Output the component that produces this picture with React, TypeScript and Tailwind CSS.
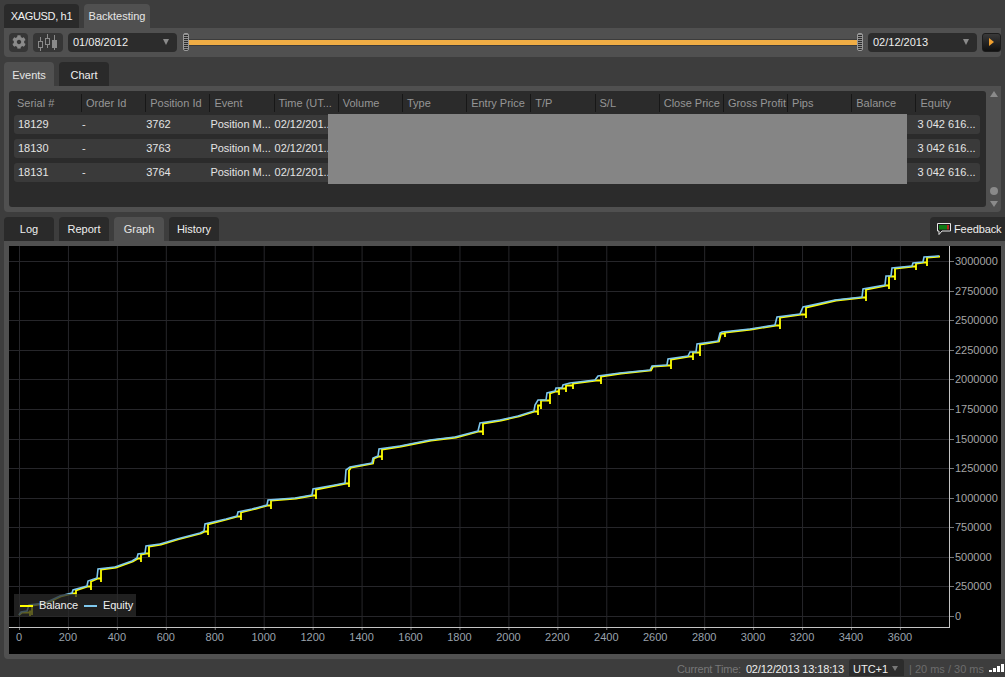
import { FaCog } from "react-icons/fa";

const font = "font-['Liberation_Sans',Arial,sans-serif]";

const columns = ["Serial #", "Order Id", "Position Id", "Event", "Time (UT...", "Volume", "Type", "Entry Price", "T/P", "S/L", "Close Price", "Gross Profit", "Pips", "Balance", "Equity"];

const rows = [
  ["18129", "-", "3762"],
  ["18130", "-", "3763"],
  ["18131", "-", "3764"],
];

// equity curve in chart pixels, [x, y] and true when the point is a jump
const curve: [number, number, boolean?][] = [
  [19, 615], [21, 612], [27, 611, true], [29, 605, true], [45, 603], [60, 596], [72, 593], [73, 590, true], [87, 586], [88, 581, true], [97, 578], [98, 569, true],
  [115, 567], [132, 561], [137, 558], [138, 554, true], [145, 553], [146, 546, true], [160, 544], [177, 539], [200, 533], [204, 531], [205, 524, true],
  [226, 519], [237, 516], [238, 512, true], [252, 509], [267, 505], [268, 500, true], [295, 498], [312, 495], [313, 489, true], [335, 485], [345, 483], [346, 470, true], [350, 467], [372, 463], [373, 458], [378, 456], [379, 449, true],
  [400, 446], [430, 440], [455, 437], [478, 431], [480, 423, true], [500, 420], [518, 416], [534, 411], [535, 405, true], [538, 400, true], [546, 400], [547, 393, true],
  [555, 391], [556, 388, true], [562, 388], [563, 385, true], [570, 383, true], [595, 380], [598, 376, true], [620, 373], [650, 370], [652, 366], [667, 365], [668, 359, true],
  [688, 356], [690, 352, true], [696, 352], [697, 344, true], [718, 341], [720, 333], [722, 332, true], [750, 329], [775, 325], [777, 317, true], [800, 314], [803, 307, true], [835, 300], [862, 297], [863, 289, true],
  [885, 285], [886, 276, true], [891, 276], [892, 268, true], [912, 266], [913, 263, true], [923, 262], [924, 257, true], [939, 256],
];

const equityPath = curve.map(([x, y], i) => `${i ? "L" : "M"}${x} ${y}`).join(" ");
const balancePath = curve
  .map(([x, y, jump], i) => {
    if (!i) return `M${x} ${y}`;
    const prev = curve[i - 1][1];
    if (jump) return `L${x + 3} ${prev + 0.5} L${x + 3} ${prev + 4} L${x + 3} ${y + 0.5}`;
    return `L${x + 1} ${y + 0.5}`;
  })
  .join(" ");

const xTicks = Array.from({ length: 19 }, (_, i) => i * 200);
const yTicks = Array.from({ length: 13 }, (_, i) => i * 250000);
const xPos = (v: number) => 10 + v * 0.2447;
const yPos = (v: number) => 370 - v / 8451;

const Tab = ({ label, active, w }: { label: string; active?: boolean; w: string }) => (
  <div className={`${w} h-6 pt-[2px] rounded-t-[4px] flex items-center justify-center text-[11px] ${active ? "bg-[#505050] text-[#e6e6e6]" : "bg-[#2a2a2a] text-[#efefef]"}`}>
    {label}
  </div>
);

const DateSelect = ({ value, w }: { value: string; w: string }) => (
  <div className={`${w} h-[19px] rounded-[4px] bg-[#2c2c2c] flex items-center justify-between pl-[5px] pr-[8px] text-[11px] text-[#efefef]`}>
    {value}
    <span className="w-0 h-0 border-x-[3px] border-x-transparent border-t-[6px] border-t-[#8a8a8a]" />
  </div>
);

const SliderHandle = () => (
  <div className="w-[6px] h-[18px] rounded-[2px] border border-[#9a9a9a] bg-[repeating-linear-gradient(0deg,#2a2a2a_0px,#2a2a2a_1px,#8c8c8c_1px,#8c8c8c_2px)] shrink-0" />
);

const Chart = () => (
  <svg width="992" height="408" className="block" style={{ fontFamily: "'Liberation Sans', Arial, sans-serif" }}>
    <rect width="992" height="408" fill="#000" />
    {xTicks.map((v) => (
      <g key={v}>
        <line x1={xPos(v) + 0.5} x2={xPos(v) + 0.5} y1="0" y2="381" stroke="#26262a" />
        <line x1={xPos(v) + 0.5} x2={xPos(v) + 0.5} y1="381" y2="384" stroke="#777" />
        <text x={xPos(v)} y="395" fontSize="11" fill="#9aa3ad" textAnchor="middle">{v}</text>
      </g>
    ))}
    {yTicks.map((v) => (
      <g key={v}>
        <line x1="0" x2="940" y1={Math.round(yPos(v)) + 0.5} y2={Math.round(yPos(v)) + 0.5} stroke="#26262a" />
        <line x1="940" x2="945" y1={Math.round(yPos(v)) + 0.5} y2={Math.round(yPos(v)) + 0.5} stroke="#777" />
        <text x="946" y={yPos(v) + 4} fontSize="11" fill="#a5a5a5">{v}</text>
      </g>
    ))}
    <line x1="0" x2="941" y1="381.5" y2="381.5" stroke="#c4c4c4" />
    <line x1="940.5" x2="940.5" y1="0" y2="382" stroke="#c4c4c4" />
    <g transform="translate(-9 -246)" fill="none" strokeLinejoin="miter">
      <path d={balancePath} stroke="#ffff00" strokeWidth="1.8" />
      <path d={equityPath} stroke="#7ec8ee" strokeWidth="1.6" />
    </g>
  </svg>
);

export default function App() {
  return (
    <div className={`${font} w-[1005px] h-[677px] overflow-hidden bg-[#3d3d3d] flex flex-col`}>
      <div className="flex gap-[5px] pl-1 pt-1 h-7">
        <div className="w-[75px] h-6 rounded-t-[4px] bg-[#2a2a2a] text-[#f2f2f2] text-[11px] tracking-[-0.35px] flex items-center justify-center">XAGUSD, h1</div>
        <div className="w-[66px] h-6 rounded-t-[4px] bg-[#505050] text-[#e6e6e6] text-[11px] flex items-center justify-center">Backtesting</div>
      </div>

      <div className="mx-1 h-[29px] rounded-b-[4px] bg-[#505050] flex items-center pl-[5px] gap-[5px]">
        <div className="w-[19px] h-[19px] rounded-[4px] bg-[#363636] flex items-center justify-center text-[#8a8a8a]">
          <FaCog size={14} />
        </div>
        <div className="w-[30px] h-[19px] rounded-[4px] bg-[#363636] flex items-center justify-center">
          <svg width="22" height="19" viewBox="0 0 22 19" fill="none">
            <path d="M3.5 4v14M10.5 1v14M17.5 2v15" stroke="#8a8a8a" />
            <rect x="1.5" y="8.5" width="4" height="6" fill="#363636" stroke="#8a8a8a" />
            <rect x="8.5" y="5.5" width="4" height="6" fill="#363636" stroke="#8a8a8a" />
            <rect x="15.5" y="7.5" width="4" height="7" fill="#8a8a8a" stroke="#8a8a8a" />
          </svg>
        </div>
        <DateSelect value="01/08/2012" w="w-[109px]" />
        <div className="flex-1 flex items-center ml-px">
          <SliderHandle />
          <div className="flex-1 h-[7px] bg-[#f0ad45] border-y border-[#3c3c3c]" />
          <SliderHandle />
        </div>
        <DateSelect value="02/12/2013" w="w-[109px]" />
        <div className="w-[19px] h-[19px] rounded-[3px] border border-[#1c1c1c] bg-gradient-to-b from-[#3a3a3a] to-[#111] flex items-center justify-center">
          <span className="w-0 h-0 border-y-[4px] border-y-transparent border-l-[5px] border-l-[#f0a030]" />
        </div>
      </div>

      <div className="flex gap-[5px] pl-1 mt-[5px]">
        <Tab label="Events" active w="w-[50px]" />
        <Tab label="Chart" w="w-[50px]" />
      </div>

      <div className="mx-1 h-[126px] bg-[#505050] rounded-b-[4px] flex pl-[5px] pr-1 py-[5px]">
        <div className="relative w-[980px] bg-[#2b2b2b] rounded-[3px] pl-[5px] pr-[6px]">
          <div className="grid grid-cols-[67px_repeat(14,64.2px)] h-6 pt-px items-center text-[11px] text-[#969696]">
            {columns.map((c, i) => (
              <div key={c} className={`h-[18px] flex items-center whitespace-nowrap overflow-hidden ${i ? "pl-1 border-l border-[#171717]" : "pl-[3px]"}`}>{c}</div>
            ))}
          </div>
          <div className="flex flex-col gap-[5px]">
            {rows.map((r) => (
              <div key={r[0]} className="grid grid-cols-[67px_repeat(14,64.2px)] h-[19px] rounded-[3px] bg-[#3a3a3a] items-center text-[11px] text-[#e4e4e4]">
                <div className="pl-1">{r[0]}</div>
                <div className="pl-px">{r[1]}</div>
                <div className="pl-px">{r[2]}</div>
                <div className="pl-px whitespace-nowrap">Position M...</div>
                <div className="pl-px whitespace-nowrap">02/12/201...</div>
                <div className="col-start-15 pl-[2px] whitespace-nowrap">3 042 616...</div>
              </div>
            ))}
          </div>
          <div className="absolute left-[319px] top-[23px] w-[579px] h-[70px] bg-[#858585]" />
        </div>
        <div className="flex-1 flex flex-col items-center justify-between ml-[4px]">
          <span className="w-0 h-0 border-x-[4px] border-x-transparent border-b-[6px] border-b-[#8a8a8a]" />
          <div className="flex flex-col items-center gap-[6px]">
            <span className="w-2 h-2 rounded-full bg-[#8a8a8a]" />
            <span className="w-0 h-0 border-x-[4px] border-x-transparent border-t-[6px] border-t-[#8a8a8a]" />
          </div>
        </div>
      </div>

      <div className="flex gap-[5px] pl-1 mt-[5px] pr-0 items-end">
        <Tab label="Log" w="w-[50px]" />
        <Tab label="Report" w="w-[50px]" />
        <Tab label="Graph" active w="w-[50px]" />
        <Tab label="History" w="w-[50px]" />
        <div className="ml-auto w-[75px] h-6 pt-[2px] rounded-tl-[4px] bg-[#2a2a2a] flex items-center gap-[3px] pl-[7px] text-[11px] tracking-[-0.1px] text-[#efefef] whitespace-nowrap">
          <svg width="14" height="13" viewBox="0 0 14 13" className="shrink-0">
            <path d="M1 .5h12.5v7.5H5L2 11.5V8H.5V.5z" fill="#1c1c1c" stroke="#e6e6e6" />
            <rect x="2" y="2" width="8" height="4.5" fill="#0f7a14" />
            <rect x="10" y="2" width="2" height="4.5" fill="#b3261e" />
          </svg>
          Feedback
        </div>
      </div>

      <div className="mx-1 mr-0 h-[419px] bg-[#505050] rounded-bl-[4px] pl-[5px] pt-[5px] pr-[4px]">
        <div className="relative w-[992px] h-[408px]">
          <Chart />
          <div className="absolute left-[5px] top-[348px] w-[122px] h-[23px] pt-px bg-[#2b2b2b]/75 flex items-center pl-[6px] text-[11px] tracking-[-0.1px] text-[#efefef]">
            <span className="w-[13px] h-[2px] bg-[#ffff00] mr-[6px]" />
            Balance
            <span className="w-[13px] h-[2px] bg-[#7ec8ee] ml-[6px] mr-[6px]" />
            Equity
          </div>
        </div>
      </div>

      <div className="flex-1 flex items-center justify-end text-[11px] pr-0">
        <span className="text-[#777] pt-[2px] tracking-[-0.2px]">Current Time:</span>
        <span className="ml-[5px] text-[#efefef] tracking-[-0.15px] pt-[2px]">02/12/2013 13:18:13</span>
        <div className="ml-[5px] w-[55px] h-[17px] rounded-t-[3px] bg-[#2c2c2c] flex items-center justify-between pl-1 pr-[6px] pt-[2px] text-[#efefef]">
          UTC+1
          <span className="w-0 h-0 border-x-[3px] border-x-transparent border-t-[5px] border-t-[#777]" />
        </div>
        <span className="ml-[5px] text-[#6c6c6c] pt-[2px]">| 20 ms / 30 ms</span>
        <div className="ml-[5px] flex items-end gap-[1px] h-[9px] w-[16px] shrink-0">
          <span className="w-[3px] h-[2px] bg-white" />
          <span className="w-[3px] h-[4px] bg-white" />
          <span className="w-[3px] h-[6px] bg-white" />
          <span className="w-[3px] h-[8px] bg-white" />
        </div>
      </div>
    </div>
  );
}
